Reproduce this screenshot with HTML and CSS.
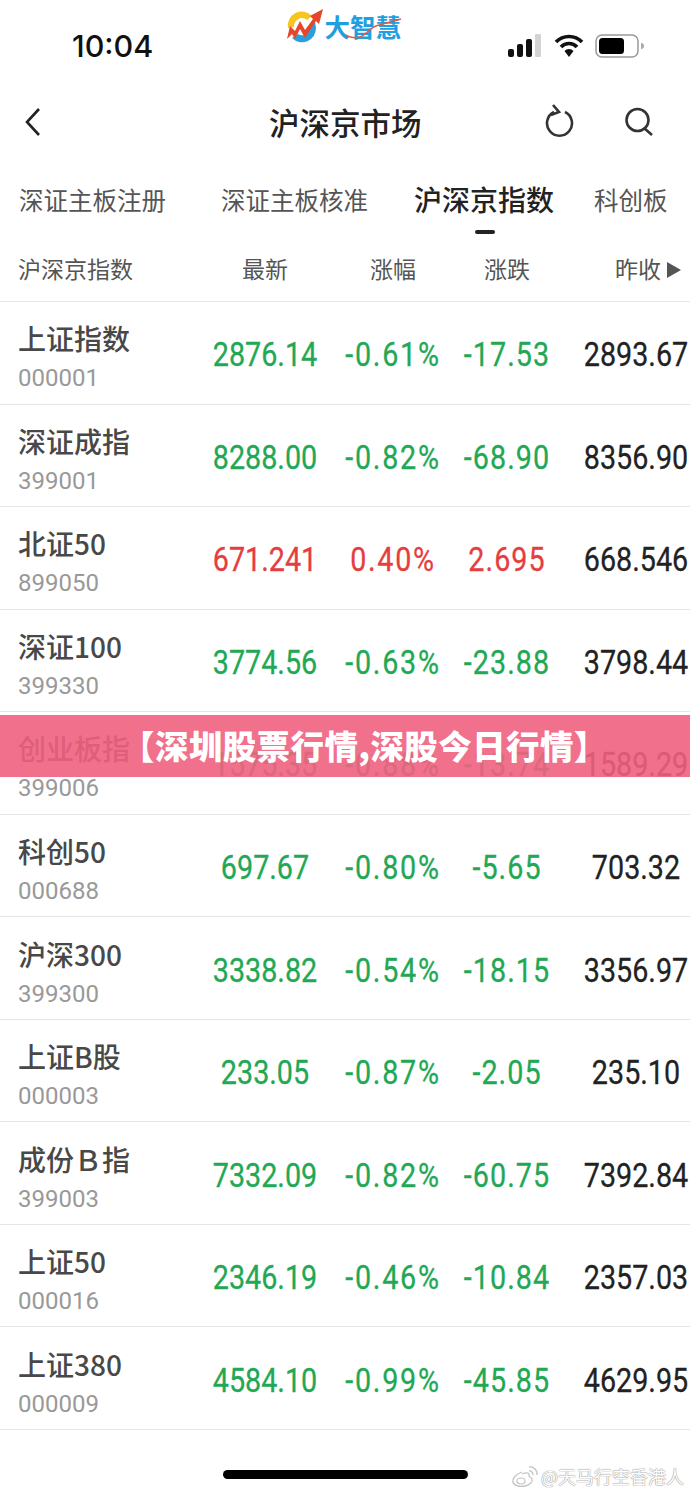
FILE: index.html
```html
<!DOCTYPE html>
<html lang="en">
<head>
  <meta charset="UTF-8">
  <meta name="viewport" content="width=device-width, initial-scale=1.0">
  <title>沪深京市场</title>
  <link rel="stylesheet" href="styles.css">
</head>
<body>
  <div class="page">
    <div class="statusbar">
      <span class="time">10:04</span>
      <div class="logo">
        <svg width="38" height="36" viewBox="0 0 38 36">
          <path d="M3 20 A14 14 0 0 1 27 8 L22 12 A8 8 0 0 0 9 19 Z" fill="#f7c51e"/>
          <path d="M7 30 A14 14 0 0 0 31 20 L30 14 L24 20 A7 7 0 0 1 13 26 Z" fill="#2a9fdc"/>
          <path d="M2 31 L5 18 L10 23 L15 13 L20 22 L28 11 L25 8 L38 1 L34 16 L31 13 L20 30 L15 21 L10 31 L7 26 Z" fill="#e4472b"/>
        </svg>
        <span class="logo-text">大智慧</span>
        <svg class="logo-swoosh" width="56" height="24" viewBox="0 0 56 24">
          <path d="M0 18 C8 22 14 22 20 17 C26 12 28 9 34 8 L56 2" fill="none" stroke="#e4573f" stroke-width="1.500"/>
        </svg>
      </div>
      <div class="status-icons">
        <svg width="36" height="24" viewBox="0 0 36 24">
          <rect x="1" y="15" width="6" height="8" rx="2" fill="#111"/>
          <rect x="10" y="10" width="6" height="13" rx="2" fill="#111"/>
          <rect x="19" y="5" width="6" height="18" rx="2" fill="#111"/>
          <rect x="28" y="0" width="6" height="23" rx="1" fill="#d4d4d4"/>
        </svg>
        <svg width="30" height="24" viewBox="0 0 30 24">
          <path d="M2 8 A18 18 0 0 1 28 8" fill="none" stroke="#111" stroke-width="3.6"/>
          <path d="M7 13 A11 11 0 0 1 23 13" fill="none" stroke="#111" stroke-width="3.6"/>
          <path d="M10.500 17 L15 23 L19.500 17 A6 6 0 0 0 10.500 17 Z" fill="#111"/>
        </svg>
        <svg width="49" height="24" viewBox="0 0 49 24">
          <rect x="1" y="1" width="42" height="22" rx="6" fill="none" stroke="#999" stroke-width="1.500"/>
          <rect x="4" y="4" width="25" height="16" rx="3.500" fill="#000"/>
          <path d="M46 9 A3 3 0 0 1 46 15 Z" fill="#aaa"/>
        </svg>
      </div>
    </div>

    <div class="navbar">
      <svg class="nav-back" width="18" height="30" viewBox="0 0 18 30">
        <path d="M15 2 L3 15 L15 28" fill="none" stroke="#222" stroke-width="2.600"/>
      </svg>
      <h1 class="nav-title">沪深京市场</h1>
      <svg class="nav-refresh" width="30" height="36" viewBox="0 0 30 36">
        <path d="M9 8 A12.500 12.500 0 1 0 20 8" fill="none" stroke="#333" stroke-width="2.600"/>
        <path d="M8 1 L14 8 L6 11" fill="none" stroke="#333" stroke-width="2.600"/>
      </svg>
      <svg class="nav-search" width="30" height="30" viewBox="0 0 30 30">
        <circle cx="13.500" cy="13" r="11" fill="none" stroke="#333" stroke-width="2.600"/>
        <path d="M20 21 L28 28" stroke="#333" stroke-width="2.600"/>
      </svg>
    </div>

    <div class="tabs">
      <span class="tab">深证主板注册</span>
      <span class="tab">深证主板核准</span>
      <span class="tab tab-active">沪深京指数</span>
      <span class="tab">科创板</span>
    </div>

    <div class="row-grid thead">
      <span>沪深京指数</span>
      <span class="c">最新</span>
      <span class="c">涨幅</span>
      <span class="c">涨跌</span>
      <span class="c last">昨收<i class="arrow"></i></span>
    </div>

    <div class="row-grid row">
      <div class="name">上证指数<small>000001</small></div>
      <span class="c down">2876.14</span><span class="c pct down">-0.61%</span><span class="c chg down">-17.53</span><span class="c prev">2893.67</span>
    </div>
    <div class="row-grid row">
      <div class="name">深证成指<small>399001</small></div>
      <span class="c down">8288.00</span><span class="c pct down">-0.82%</span><span class="c chg down">-68.90</span><span class="c prev">8356.90</span>
    </div>
    <div class="row-grid row">
      <div class="name">北证50<small>899050</small></div>
      <span class="c up">671.241</span><span class="c pct up">0.40%</span><span class="c chg up">2.695</span><span class="c prev">668.546</span>
    </div>
    <div class="row-grid row">
      <div class="name">深证100<small>399330</small></div>
      <span class="c down">3774.56</span><span class="c pct down">-0.63%</span><span class="c chg down">-23.88</span><span class="c prev">3798.44</span>
    </div>
    <div class="row-grid row">
      <div class="name">创业板指<small>399006</small></div>
      <span class="c down">1575.35</span><span class="c pct down">-0.88%</span><span class="c chg down">-13.74</span><span class="c prev">1589.29</span>
    </div>
    <div class="row-grid row">
      <div class="name">科创50<small>000688</small></div>
      <span class="c down">697.67</span><span class="c pct down">-0.80%</span><span class="c chg down">-5.65</span><span class="c prev">703.32</span>
    </div>
    <div class="row-grid row">
      <div class="name">沪深300<small>399300</small></div>
      <span class="c down">3338.82</span><span class="c pct down">-0.54%</span><span class="c chg down">-18.15</span><span class="c prev">3356.97</span>
    </div>
    <div class="row-grid row">
      <div class="name">上证B股<small>000003</small></div>
      <span class="c down">233.05</span><span class="c pct down">-0.87%</span><span class="c chg down">-2.05</span><span class="c prev">235.10</span>
    </div>
    <div class="row-grid row">
      <div class="name">成份Ｂ指<small>399003</small></div>
      <span class="c down">7332.09</span><span class="c pct down">-0.82%</span><span class="c chg down">-60.75</span><span class="c prev">7392.84</span>
    </div>
    <div class="row-grid row">
      <div class="name">上证50<small>000016</small></div>
      <span class="c down">2346.19</span><span class="c pct down">-0.46%</span><span class="c chg down">-10.84</span><span class="c prev">2357.03</span>
    </div>
    <div class="row-grid row">
      <div class="name">上证380<small>000009</small></div>
      <span class="c down">4584.10</span><span class="c pct down">-0.99%</span><span class="c chg down">-45.85</span><span class="c prev">4629.95</span>
    </div>

    <div class="home-area">
      <div class="home-bar"></div>
    </div>

    <!-- overlays -->
    <div class="banner">【深圳股票行情,深股今日行情】</div>
    <div class="watermark">
      <svg width="28" height="24" viewBox="0 0 28 24">
        <path d="M11 8 C5 10 1 15 2 18 C3 22 9 23 14 22 C19 21 22 18 21 15 C20 13 18 13 18 12 C19 9 16 8 11 10" fill="#fff" stroke="#c4c4c4" stroke-width="1.300"/>
        <ellipse cx="10" cy="17" rx="4" ry="3" fill="none" stroke="#c4c4c4" stroke-width="1.200"/>
        <path d="M18 3 A7 7 0 0 1 26 11 M18 7 A3.500 3.500 0 0 1 22 11" fill="none" stroke="#c4c4c4" stroke-width="1.300"/>
      </svg>
      <span class="watermark-text">@天马行空香港人</span>
    </div>
  </div>
</body>
</html>
```

FILE: styles.css
```css
*{box-sizing:border-box;}
html,body{margin:0; padding:0; background:#fff;}
body{font-family:"Noto Sans CJK SC","Noto Sans",sans-serif; overflow:hidden;}
.page{position:relative; width:690px; height:1493px; overflow:hidden;}

.statusbar{display:flex; justify-content:space-between; height:90px; padding:0 46px 0 72px;}
.time{margin-top:26px; font-family:Inter,Roboto,sans-serif; font-size:30.500px; line-height:40px; font-weight:500; color:#111;}
.logo{position:relative; display:flex; align-items:center; height:36px; margin:8px 0 0 26px;}
.logo-text{margin-left:1px; font-size:25.500px; line-height:36px; font-weight:700; color:#1f9fe0; white-space:nowrap;}
.logo-swoosh{position:absolute; left:60px; top:9px;}
.status-icons{display:flex; align-items:center; gap:11px; height:24px; margin-top:34px;}

.navbar{display:flex; align-items:center; height:64px; padding-left:24px;}
.nav-back{margin-right:227px;}
.nav-title{width:152px; margin:0; font-size:30.500px; line-height:40px; font-weight:500; color:#222; white-space:nowrap;}
.nav-refresh{margin-left:124px;}
.nav-search{margin-left:49px;}

.tabs{display:grid; grid-template-columns:202px 193px 180px auto; align-items:center; height:70px; margin-top:10px; padding-left:19px; color:#555; font-size:24.500px; white-space:nowrap;}
.tab-active{position:relative; font-size:28px; font-weight:500; color:#222;}
.tab-active:after{content:""; position:absolute; left:61px; bottom:-15px; width:20px; height:4px; border-radius:2px; background:#222;}

.row-grid{display:grid; grid-template-columns:190px 114px 142px 86px 140px; padding-left:18px; align-items:center;}
.thead{height:68px; border-bottom:1px solid #e8e8e8; color:#555; font-size:23px;}
.row{height:102.550px; padding-top:4px; border-bottom:1px solid #e6e6e6; font-family:Roboto,"Noto Sans",sans-serif; font-size:33px; font-weight:400; white-space:nowrap;}
.c{text-align:center;}
.row .c{display:flex; justify-content:center; transform:scaleX(.87); -webkit-text-stroke:.3px currentColor;}
.row .pct{letter-spacing:2px;}
.row .chg{letter-spacing:1.200px;}
.last{text-align:right; padding-right:9px;}
.arrow{display:inline-block; margin-left:6px; border-left:14px solid #555; border-top:8px solid transparent; border-bottom:8px solid transparent;}
.row .prev{padding-left:32px; color:#222; transform-origin:86px 50%;}
.down{color:#22a854;}
.up{color:#e63d3f;}
.name{display:flex; flex-direction:column; margin-top:7px; font-family:"Noto Sans CJK SC",sans-serif; font-size:28px; line-height:38px; font-weight:500; color:#484848;}
.name small{margin-top:2px; font-family:Roboto,sans-serif; font-size:24px; line-height:38px; font-weight:400; color:#999;}

.home-area{display:flex; justify-content:center; padding-top:40px;}
.home-bar{width:245px; height:9px; border-radius:5px; background:#000;}

.banner{position:absolute; left:0; top:715px; width:690px; height:62px; padding-left:121px; background:rgba(240,96,128,.9); color:#fff; font-size:33.500px; line-height:60px; font-weight:900; letter-spacing:.4px; white-space:nowrap;}
.watermark{position:absolute; left:511px; top:1463px; display:flex; align-items:center; gap:2px;}
.watermark-text{font-size:18px; line-height:26px; color:#fff; white-space:nowrap; text-shadow:0 0 1px #888,0 0 1px #888;}
```
